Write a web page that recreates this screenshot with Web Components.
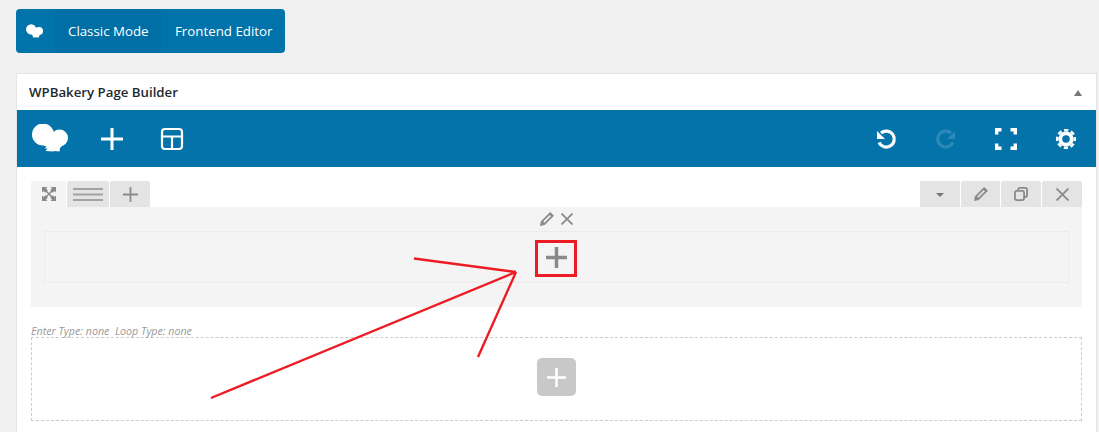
<!DOCTYPE html>
<html lang="en">
<head>
<meta charset="utf-8">
<title>WPBakery Page Builder</title>
<style>
    html, body { margin: 0; height: 432px; overflow: hidden; }
    body { background: #f1f1f1; position: relative; font-family: "Open Sans", "Liberation Sans", sans-serif; }
    .page { padding: 9px 2px 0 16px; display: flex; flex-direction: column; gap: 20px; }
</style>
</head>
<body>
<div class="page">
    <mode-switch></mode-switch>
    <builder-panel>
        <builder-toolbar></builder-toolbar>
        <builder-row></builder-row>
        <empty-section caption="Enter Type: none&nbsp; Loop Type: none"></empty-section>
    </builder-panel>
</div>
<red-annotation></red-annotation>

<script>
const CLOUD = `<circle cx="11" cy="10.500" r="11"/><circle cx="27.500" cy="14" r="8.500"/><path d="M12 6l9 3 6-3v16h3l-2 2-.5 3.500-5-.5-1 .5-8-.5 2-2.500-3 0 2-2-3-1z"/>`;
const PENCIL = `<path fill="#8a8a8a" fill-rule="evenodd" d="M10.200 0l3.800 3.800-9.300 9.300L0 14l.9-4.700zM9.700 3.100L3.200 9.600l1.200 1.200 6.500-6.500z"/>`;

class ModeSwitch extends HTMLElement {
    connectedCallback() {
        this.attachShadow({ mode: 'open' });
        this.shadowRoot.innerHTML = `
            <style>
                :host { display: flex; width: 269px; height: 44px; background: #0073aa; border-radius: 4px; overflow: hidden; color: #fff; font-size: 13.300px; line-height: 44px; }
                .logo { width: 39px; display: flex; align-items: center; justify-content: center; }
                svg { width: 17px; height: 14px; fill: #fff; margin-right: 2px; }
                .classic { width: 106px; padding-left: 13px; box-sizing: border-box; background: #006fa6; }
                .frontend { padding-left: 14px; }
            </style>
            <div class="logo"><svg viewBox="0 0 36 28">${CLOUD}</svg></div>
            <div class="classic">Classic Mode</div>
            <div class="frontend">Frontend Editor</div>
        `;
    }
}

class BuilderPanel extends HTMLElement {
    connectedCallback() {
        this.attachShadow({ mode: 'open' });
        this.shadowRoot.innerHTML = `
            <style>
                :host { display: block; background: #fff; border: 1px solid #e5e5e5; box-sizing: border-box; padding-bottom: 30px; }
                header { height: 36px; display: flex; align-items: center; justify-content: space-between; padding: 0 14px 0 12px; font-size: 13.250px; font-weight: 600; color: #23282d; }
                i { width: 0; height: 0; border: 4px solid transparent; border-top: 0; border-bottom: 6px solid #72777c; margin-top: 1px; }
            </style>
            <header><span>WPBakery Page Builder</span><i></i></header>
            <slot></slot>
        `;
    }
}

class BuilderToolbar extends HTMLElement {
    connectedCallback() {
        this.attachShadow({ mode: 'open' });
        this.shadowRoot.innerHTML = `
            <style>
                :host { display: flex; align-items: center; justify-content: space-between; height: 57px; background: #0473aa; }
                div { display: flex; align-items: center; }
                svg { display: block; }
                .line { fill: none; stroke: #fff; stroke-width: 3; }
                .left { padding-left: 15px; }
                .right { padding-right: 19px; }
            </style>
            <div class="left">
                <svg width="36" height="28" viewBox="0 0 36 28" fill="#fff" style="margin-top:-1px">${CLOUD}</svg>
                <svg width="22" height="22" viewBox="0 0 22 22" class="line" style="margin-left:33px"><path d="M11 0v22M0 11h22"/></svg>
                <svg width="24" height="24" viewBox="0 0 24 24" class="line" style="margin-left:37px;stroke-width:2.200"><rect x="2" y="2" width="20" height="20" rx="3"/><path d="M2 9.500h20M12 9.500V22"/></svg>
            </div>
            <div class="right">
                <svg width="22" height="22" viewBox="0 0 22 22" class="line" style="stroke-width:3.200"><path d="M6 5a8 8 0 1 1-2 9.500"/><path d="M2 3v8h8z" fill="#fff" stroke="none"/></svg>
                <svg width="22" height="22" viewBox="0 0 22 22" class="line" style="margin-left:38px;stroke:#2d89b8;stroke-width:3.200"><path d="M16 5a8 8 0 1 0 2 9.500"/><path d="M20 3v8h-8z" fill="#2d89b8" stroke="none"/></svg>
                <svg width="22" height="22" viewBox="0 0 22 22" class="line" style="margin-left:38px;stroke-width:3.400"><path d="M1.700 6.500V1.700H6.500M15.500 1.700h4.800V6.500M20.300 15.500v4.800H15.500M6.500 20.300H1.700V15.500"/></svg>
                <svg width="22" height="22" viewBox="0 0 22 22" class="line" style="margin-left:38px"><circle cx="11" cy="11" r="5.700" stroke-width="3.800"/><circle cx="11" cy="11" r="8.800" stroke-width="2.600" stroke-dasharray="4.200 2.710" stroke-dashoffset="2.100"/></svg>
            </div>
        `;
    }
}

class BuilderRow extends HTMLElement {
    connectedCallback() {
        this.attachShadow({ mode: 'open' });
        this.shadowRoot.innerHTML = `
            <style>
                :host { display: block; margin: 14px 14px 0; }
                .tabs { display: flex; justify-content: space-between; height: 26px; }
                .group { display: flex; gap: 1px; }
                .tab { height: 26px; width: 39px; background: #e4e4e4; border-radius: 2px 2px 0 0; display: flex; align-items: center; justify-content: center; }
                .tab.active { width: 35px; background: #f4f4f4; }
                .tab.wide { width: 42px; }
                .tab.add { width: 40px; }
                .right .tab { width: 40px; }
                .right .tab:nth-child(2) { width: 39px; }
                svg { display: block; }
                .stroke { fill: none; stroke: #8a8a8a; }
                .body { height: 100px; background: #f4f4f4; box-sizing: border-box; padding: 0 13px; display: flex; flex-direction: column; }
                .controls { height: 24px; display: flex; justify-content: center; align-items: center; gap: 7px; }
                .inner { height: 52px; box-sizing: border-box; border: 1px dotted #e2e2e2; display: flex; align-items: center; justify-content: center; }
            </style>
            <div class="tabs">
                <div class="group">
                    <div class="tab active"><svg width="14" height="14" viewBox="0 0 14 14"><path fill="#8a8a8a" d="M0 0h5.500L4 1.500 5.800 3.300 3.300 5.800 1.500 4 0 5.500zM14 0v5.500L12.500 4 10.700 5.800 8.200 3.300 10 1.500 8.500 0zM0 14V8.500L1.500 10l1.800-1.800 2.500 2.500L4 12.500 5.500 14zM14 14H8.500l1.500-1.500-1.800-1.800 2.500-2.500 1.800 1.800L14 8.500z"/><path fill="none" stroke="#8a8a8a" stroke-width="1.500" d="M4 4l6 6M10 4l-6 6"/></svg></div>
                    <div class="tab wide"><svg width="30" height="13" viewBox="0 0 30 13" class="stroke" style="stroke:#a3a3a3;stroke-width:2"><path d="M0 1h30M0 6.500h30M0 12h30"/></svg></div>
                    <div class="tab add"><svg width="15" height="15" viewBox="0 0 15 15" class="stroke" style="stroke-width:1.800"><path d="M7.500 0v15M0 7.500h15"/></svg></div>
                </div>
                <div class="group right">
                    <div class="tab"><i style="border:4px solid transparent;border-top:4px solid #777;border-bottom:0;margin-top:2px"></i></div>
                    <div class="tab"><svg width="14" height="14" viewBox="0 0 14 14">${PENCIL}</svg></div>
                    <div class="tab"><svg width="14" height="14" viewBox="0 0 14 14" class="stroke" style="stroke-width:1.800"><rect x=".9" y="3.900" width="9.200" height="9.200" rx="2"/><path d="M4 3.500V2.900a2 2 0 0 1 2-2h5.100a2 2 0 0 1 2 2V8a2 2 0 0 1-2 2h-1"/></svg></div>
                    <div class="tab"><svg width="13" height="13" viewBox="0 0 13 13" class="stroke" style="stroke-width:1.800"><path d="M.5.500l12 12M12.500.500l-12 12"/></svg></div>
                </div>
            </div>
            <div class="body">
                <div class="controls">
                    <svg width="14" height="14" viewBox="0 0 14 14">${PENCIL}</svg>
                    <svg width="12" height="12" viewBox="0 0 12 12" class="stroke" style="stroke-width:1.800"><path d="M.5.500l11 11M11.500.500l-11 11"/></svg>
                </div>
                <div class="inner"><svg width="21" height="21" viewBox="0 0 21 21" class="stroke" style="stroke-width:3.500"><path d="M10.500 0v21M0 10.500h21"/></svg></div>
            </div>
        `;
    }
}

class EmptySection extends HTMLElement {
    connectedCallback() {
        this.attachShadow({ mode: 'open' });
        this.shadowRoot.innerHTML = `
            <style>
                :host { display: block; margin: 19px 14px 0; }
                .caption { height: 11px; font-size: 10.700px; line-height: 11px; font-style: italic; color: #999; white-space: nowrap; }
                .box { height: 84px; box-sizing: border-box; border: 1px dashed #ccc; padding-bottom: 4px; display: flex; align-items: center; justify-content: center; }
                .add { width: 39px; height: 38px; background: #c8c8c8; border-radius: 5px; display: flex; align-items: center; justify-content: center; }
                svg { fill: none; stroke: #fff; stroke-width: 2.500; display: block; }
            </style>
            <div class="caption"></div>
            <div class="box"><div class="add"><svg width="19" height="19" viewBox="0 0 19 19"><path d="M9.500 0v19M0 9.500h19"/></svg></div></div>
        `;
        this.shadowRoot.querySelector('.caption').textContent = this.getAttribute('caption');
    }
}

// red arrows and box drawn over the screenshot
class RedAnnotation extends HTMLElement {
    connectedCallback() {
        this.attachShadow({ mode: 'open' });
        this.shadowRoot.innerHTML = `
            <style>
                :host { position: absolute; left: 0; top: 0; width: 1099px; height: 432px; pointer-events: none; }
                svg { display: block; fill: none; stroke: #ed1c24; }
            </style>
            <svg width="1099" height="432" viewBox="0 0 1099 432">
                <path stroke-width="2.400" d="M414 258.500L516 272M211 398L516 272M478 357L516 272"/>
                <rect x="536.500" y="241.500" width="39" height="34" stroke-width="3"/>
            </svg>
        `;
    }
}

customElements.define('mode-switch', ModeSwitch);
customElements.define('builder-panel', BuilderPanel);
customElements.define('builder-toolbar', BuilderToolbar);
customElements.define('builder-row', BuilderRow);
customElements.define('empty-section', EmptySection);
customElements.define('red-annotation', RedAnnotation);
</script>
</body>
</html>
